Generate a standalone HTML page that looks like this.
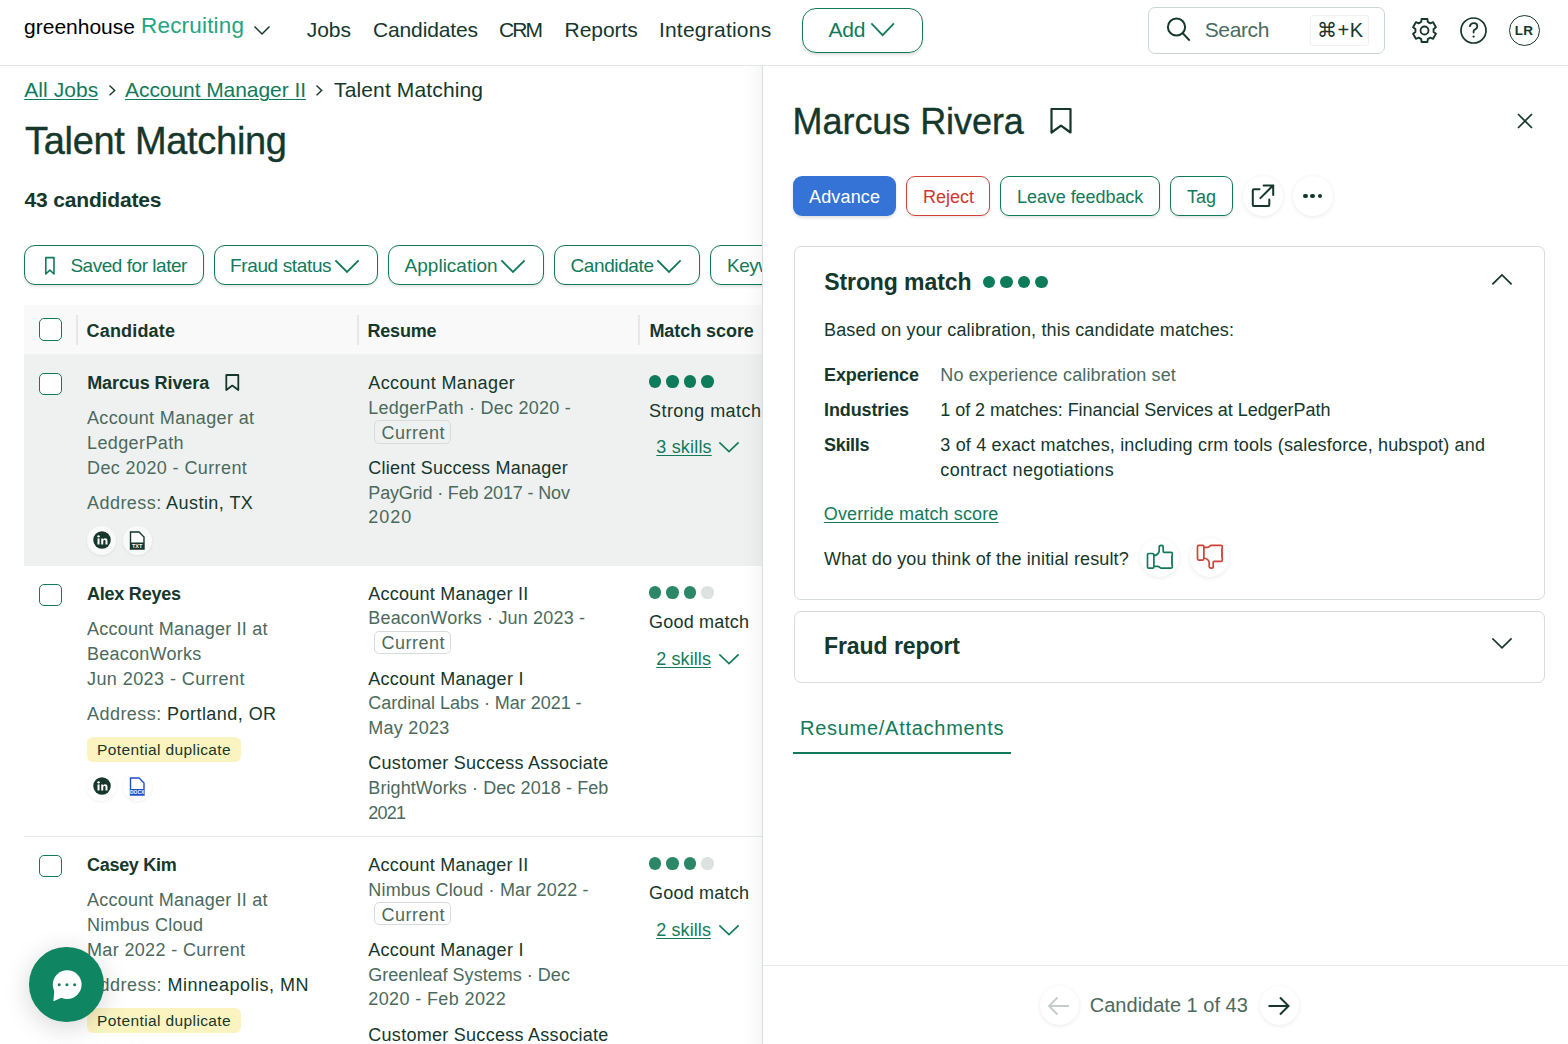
<!DOCTYPE html>
<html><head><meta charset="utf-8">
<style>
*{box-sizing:border-box;margin:0;padding:0}
html,body{width:1568px;height:1044px;overflow:hidden;background:#fff}
body{font-family:"Liberation Sans",sans-serif;color:#15372c;position:relative;-webkit-font-smoothing:antialiased}
.a{position:absolute;white-space:nowrap}
svg{position:absolute;overflow:visible}
.clip{position:absolute;overflow:hidden}
</style></head><body>
<div class="a" style="left:24.0px;top:13.62px;font-size:21px;line-height:26px;color:#000;letter-spacing:0.008px;">greenhouse</div>
<div class="a" style="left:141.0px;top:12.30px;font-size:22.5px;line-height:28px;color:#24a47f;letter-spacing:0.190px;">Recruiting</div>
<svg style="left:252px;top:24px" width="20" height="13" viewBox="0 0 20 13"><path d="M3 3 L10.0 10 L17 3" fill="none" stroke="#15372c" stroke-width="1.5" stroke-linecap="square"/></svg>
<div class="a" style="left:306.7px;top:16.92px;font-size:21px;line-height:26px;color:#15372c;letter-spacing:-0.020px;">Jobs</div>
<div class="a" style="left:373.0px;top:16.92px;font-size:21px;line-height:26px;color:#15372c;letter-spacing:-0.138px;">Candidates</div>
<div class="a" style="left:499.0px;top:16.92px;font-size:21px;line-height:26px;color:#15372c;letter-spacing:-1.910px;">CRM</div>
<div class="a" style="left:564.5px;top:16.92px;font-size:21px;line-height:26px;color:#15372c;letter-spacing:-0.039px;">Reports</div>
<div class="a" style="left:658.9px;top:16.92px;font-size:21px;line-height:26px;color:#15372c;letter-spacing:0.233px;">Integrations</div>
<div class="a" style="left:802px;top:8px;width:121px;height:45px;border:1.3px solid #127a5a;border-radius:14px;box-shadow:0 2px 3px rgba(0,0,0,.13)"></div>
<div class="a" style="left:828.4px;top:16.72px;font-size:21px;line-height:26px;color:#127a5a;letter-spacing:-0.184px;">Add</div>
<svg style="left:868.5px;top:21.3px" width="27.299999999999955" height="17.099999999999998" viewBox="0 0 27.299999999999955 17.099999999999998"><path d="M3 3 L13.649999999999977 14.099999999999998 L24.299999999999955 3" fill="none" stroke="#127a5a" stroke-width="1.8" stroke-linecap="square"/></svg>
<div class="a" style="left:1148px;top:7px;width:237px;height:47px;border:1px solid #cbd5d1;border-radius:7px"></div>
<svg style="left:1160px;top:10px" width="40" height="40" viewBox="0 0 40 40"><circle cx="16.5" cy="17" r="8.6" fill="none" stroke="#15372c" stroke-width="2"/><path d="M22.8 23.3 L29.7 30.6" stroke="#15372c" stroke-width="2"/></svg>
<div class="a" style="left:1204.7px;top:16.92px;font-size:21px;line-height:26px;color:#4b6a5d;letter-spacing:-0.368px;">Search</div>
<div class="a" style="left:1309.5px;top:14.5px;width:59.5px;height:31px;border:1px solid #eef1f0;border-radius:3px"></div>
<div class="a" style="left:1317.0px;top:17.77px;font-size:20px;line-height:25px;color:#15372c;letter-spacing:0.500px;">&#8984;+K</div>
<svg style="left:1411.5px;top:17.5px" width="25" height="25" viewBox="0 0 25 25"><path d="M9.20 3.91 L9.62 0.95 L15.38 0.95 L15.80 3.91 L18.29 5.35 L21.06 4.23 L23.94 9.22 L21.59 11.06 L21.59 13.94 L23.94 15.78 L21.06 20.77 L18.29 19.65 L15.80 21.09 L15.38 24.05 L9.62 24.05 L9.20 21.09 L6.71 19.65 L3.94 20.77 L1.06 15.78 L3.41 13.94 L3.41 11.06 L1.06 9.22 L3.94 4.23 L6.71 5.35Z" fill="none" stroke="#15372c" stroke-width="1.9" stroke-linejoin="round"/><circle cx="12.5" cy="12.5" r="4" fill="none" stroke="#15372c" stroke-width="1.8"/></svg>
<svg style="left:1460px;top:16.5px" width="27" height="27" viewBox="0 0 27 27"><circle cx="13.5" cy="13.5" r="12.5" fill="none" stroke="#15372c" stroke-width="1.7"/><path d="M9.9 9.2c.5-1.9 2-3 3.8-3 2 0 3.6 1.4 3.6 3.3 0 1.8-1.4 2.6-2.5 3.1-.9.4-1.2.9-1.2 1.7v1.3" fill="none" stroke="#15372c" stroke-width="1.8" stroke-linecap="round"/><circle cx="13.6" cy="19.6" r="1.15" fill="#15372c"/></svg>
<div class="a" style="left:1508.5px;top:15px;width:31px;height:31px;border:1.2px solid #15372c;border-radius:50%"></div>
<div class="a" style="left:1508.5px;top:23px;width:31px;text-align:center;font-size:13.5px;line-height:16px;font-weight:bold;letter-spacing:0.2px">LR</div>
<div class="a" style="left:0px;top:65px;width:1568px;height:1px;background:#e2e7e5"></div>
<div class="a" style="left:24.2px;top:76.92px;font-size:21px;line-height:26px;color:#127a5a;letter-spacing:0.067px;text-decoration:underline;text-decoration-thickness:1.4px;text-underline-offset:1.8px;">All Jobs</div>
<svg style="left:107.3px;top:82.6px" width="10.700000000000003" height="14.800000000000011" viewBox="0 0 10.700000000000003 14.800000000000011"><path d="M3 3 L7.700000000000003 7.400000000000006 L3 11.800000000000011" fill="none" stroke="#15372c" stroke-width="1.4" stroke-linecap="square"/></svg>
<div class="a" style="left:125.0px;top:76.92px;font-size:21px;line-height:26px;color:#127a5a;letter-spacing:-0.065px;text-decoration:underline;text-decoration-thickness:1.4px;text-underline-offset:1.8px;">Account Manager II</div>
<svg style="left:314.3px;top:82.6px" width="10.699999999999989" height="14.800000000000011" viewBox="0 0 10.699999999999989 14.800000000000011"><path d="M3 3 L7.699999999999989 7.400000000000006 L3 11.800000000000011" fill="none" stroke="#15372c" stroke-width="1.4" stroke-linecap="square"/></svg>
<div class="a" style="left:334.0px;top:76.82px;font-size:21px;line-height:26px;color:#15372c;letter-spacing:0.137px;">Talent Matching</div>
<div class="a" style="left:25.0px;top:116.83px;font-size:38px;line-height:48px;color:#15372c;letter-spacing:-0.296px;-webkit-text-stroke:0.35px #15372c;">Talent Matching</div>
<div class="a" style="left:24.5px;top:186.92px;font-size:21px;line-height:26px;color:#15372c;font-weight:bold;letter-spacing:-0.159px;">43 candidates</div>
<div class="clip" style="left:0;top:0;width:762px;height:1044px">
<div class="a" style="left:24px;top:245px;width:180px;height:40px;border:1.3px solid #127a5a;border-radius:11px;background:#fff;box-shadow:0 2px 3px rgba(0,0,0,.10)"></div>
<div class="a" style="left:70.4px;top:254.42px;font-size:19px;line-height:24px;color:#127a5a;letter-spacing:-0.468px;">Saved for later</div>
<svg style="left:43px;top:255px" width="14" height="22" viewBox="0 0 14 22"><path d="M2.8 2.6 H11 V19 L6.9 15.2 L2.8 19 Z" fill="none" stroke="#127a5a" stroke-width="1.6" stroke-linejoin="round"/></svg>
<div class="a" style="left:214px;top:245px;width:164px;height:40px;border:1.3px solid #127a5a;border-radius:11px;background:#fff;box-shadow:0 2px 3px rgba(0,0,0,.10)"></div>
<div class="a" style="left:230.0px;top:254.42px;font-size:19px;line-height:24px;color:#127a5a;letter-spacing:-0.363px;">Fraud status</div>
<svg style="left:333px;top:258px" width="28" height="17" viewBox="0 0 28 17"><path d="M3 3 L14.0 14 L25 3" fill="none" stroke="#127a5a" stroke-width="1.8" stroke-linecap="square"/></svg>
<div class="a" style="left:388px;top:245px;width:155.5px;height:40px;border:1.3px solid #127a5a;border-radius:11px;background:#fff;box-shadow:0 2px 3px rgba(0,0,0,.10)"></div>
<div class="a" style="left:404.6px;top:254.42px;font-size:19px;line-height:24px;color:#127a5a;letter-spacing:0.005px;">Application</div>
<svg style="left:499px;top:258px" width="28" height="17" viewBox="0 0 28 17"><path d="M3 3 L14.0 14 L25 3" fill="none" stroke="#127a5a" stroke-width="1.8" stroke-linecap="square"/></svg>
<div class="a" style="left:554px;top:245px;width:146px;height:40px;border:1.3px solid #127a5a;border-radius:11px;background:#fff;box-shadow:0 2px 3px rgba(0,0,0,.10)"></div>
<div class="a" style="left:570.5px;top:254.42px;font-size:19px;line-height:24px;color:#127a5a;letter-spacing:-0.390px;">Candidate</div>
<svg style="left:655px;top:258px" width="28" height="17" viewBox="0 0 28 17"><path d="M3 3 L14.0 14 L25 3" fill="none" stroke="#127a5a" stroke-width="1.8" stroke-linecap="square"/></svg>
<div class="a" style="left:710px;top:245px;width:150px;height:40px;border:1.3px solid #127a5a;border-radius:11px;background:#fff;box-shadow:0 2px 3px rgba(0,0,0,.10)"></div>
<div class="a" style="left:727.0px;top:254.42px;font-size:19px;line-height:24px;color:#127a5a;letter-spacing:-0.489px;">Keywords</div>
<div class="a" style="left:24px;top:305px;width:760px;height:49px;background:#f9f9f9"></div>
<div class="a" style="left:39px;top:318px;width:23px;height:23px;border:1.3px solid #127a5a;border-radius:5px;background:#fff"></div>
<div class="a" style="left:76.3px;top:315px;width:1.6px;height:30px;background:#e6e8e7"></div>
<div class="a" style="left:357.2px;top:315px;width:1.6px;height:30px;background:#e6e8e7"></div>
<div class="a" style="left:638px;top:315px;width:1.6px;height:30px;background:#e6e8e7"></div>
<div class="a" style="left:86.5px;top:320.16px;font-size:18px;line-height:22px;color:#15372c;font-weight:bold;letter-spacing:0.185px;">Candidate</div>
<div class="a" style="left:367.5px;top:320.16px;font-size:18px;line-height:22px;color:#15372c;font-weight:bold;letter-spacing:-0.207px;">Resume</div>
<div class="a" style="left:649.4px;top:319.66px;font-size:18px;line-height:22px;color:#15372c;font-weight:bold;letter-spacing:-0.055px;">Match score</div>
<div class="a" style="left:24px;top:354px;width:740px;height:211.5px;background:#eff1f1"></div>
<div class="a" style="left:39px;top:373px;width:23px;height:22px;border:1.3px solid #127a5a;border-radius:5px;background:#fff"></div>
<div class="a" style="left:87.2px;top:372.26px;font-size:18px;line-height:22px;color:#15372c;font-weight:bold;letter-spacing:-0.089px;">Marcus Rivera</div>
<svg style="left:224px;top:373px" width="18" height="19" viewBox="0 0 18 19"><path d="M2.3 2 H14.3 V17 L8.3 12.6 L2.3 17 Z" fill="none" stroke="#15372c" stroke-width="1.8" stroke-linejoin="round"/></svg>
<div class="a" style="left:87.0px;top:406.96px;font-size:18px;line-height:22px;color:#4b6a5d;letter-spacing:0.347px;">Account Manager at</div>
<div class="a" style="left:87.0px;top:432.06px;font-size:18px;line-height:22px;color:#4b6a5d;letter-spacing:0.390px;">LedgerPath</div>
<div class="a" style="left:87.0px;top:457.06px;font-size:18px;line-height:22px;color:#4b6a5d;letter-spacing:0.395px;">Dec 2020 - Current</div>
<div class="a" style="left:87.0px;top:492.06px;font-size:18px;line-height:22px;color:#4b6a5d;letter-spacing:0.450px;">Address: <span style="color:#15372c">Austin, TX</span></div>
<div class="a" style="left:87.1px;top:525.5px;width:29px;height:29px;border-radius:50%;background:rgba(255,255,255,.55);box-shadow:0 1px 3px rgba(0,0,0,.07)"></div>
<div class="a" style="left:122.5px;top:525.5px;width:29px;height:29px;border-radius:50%;background:rgba(255,255,255,.55);box-shadow:0 1px 3px rgba(0,0,0,.07)"></div>
<svg style="left:92.6px;top:531px" width="18" height="18" viewBox="0 0 18 18"><g transform="translate(9 9) scale(1.12) translate(-8 -8)"><circle cx="8" cy="8" r="7.8" fill="#15372c"/><rect x="4" y="6.6" width="1.8" height="5.4" fill="#fff"/><circle cx="4.9" cy="4.7" r="1.05" fill="#fff"/><path d="M7.3 12 V6.6 H9 V7.5 C9.5 6.8 10.2 6.5 11 6.5 C12.3 6.5 12.9 7.3 12.9 8.8 V12 H11.1 V9.1 C11.1 8.3 10.8 7.9 10.2 7.9 C9.5 7.9 9.1 8.4 9.1 9.2 V12 Z" fill="#fff"/></g></svg>
<svg style="left:129px;top:530.5px" width="16" height="19" viewBox="0 0 16 19"><path d="M1.5 1 H10 L15 6 V18 H1.5 Z" fill="#fff" stroke="#15372c" stroke-width="1.4"/><rect x="1.5" y="11.5" width="13.5" height="6.5" fill="#15372c"/><text x="8.2" y="17" font-size="5.5" font-weight="bold" fill="#fff" text-anchor="middle" font-family="Liberation Sans">TXT</text></svg>
<div class="a" style="left:368.3px;top:371.56px;font-size:18px;line-height:22px;color:#15372c;letter-spacing:0.386px;">Account Manager</div>
<div class="a" style="left:368.3px;top:396.56px;font-size:18px;line-height:22px;color:#4b6a5d;letter-spacing:0.239px;">LedgerPath · Dec 2020 -</div>
<div class="a" style="left:374.3px;top:420.3px;width:77px;height:23.3px;border:1px solid #d6dcda;border-radius:5px"></div>
<div class="a" style="left:381.5px;top:422.16px;font-size:18px;line-height:22px;color:#4b6a5d;letter-spacing:0.495px;">Current</div>
<div class="a" style="left:368.3px;top:456.56px;font-size:18px;line-height:22px;color:#15372c;letter-spacing:0.209px;">Client Success Manager</div>
<div class="a" style="left:368.3px;top:481.56px;font-size:18px;line-height:22px;color:#4b6a5d;letter-spacing:-0.148px;">PayGrid · Feb 2017 - Nov</div>
<div class="a" style="left:368.3px;top:506.36px;font-size:18px;line-height:22px;color:#4b6a5d;letter-spacing:0.951px;">2020</div>
<div class="a" style="left:648.9000000000001px;top:375.3px;width:12.6px;height:12.6px;border-radius:50%;background:#0e7b5a"></div>
<div class="a" style="left:666.3000000000001px;top:375.3px;width:12.6px;height:12.6px;border-radius:50%;background:#0e7b5a"></div>
<div class="a" style="left:683.7px;top:375.3px;width:12.6px;height:12.6px;border-radius:50%;background:#0e7b5a"></div>
<div class="a" style="left:701.1px;top:375.3px;width:12.6px;height:12.6px;border-radius:50%;background:#0e7b5a"></div>
<div class="a" style="left:649.0px;top:400.06px;font-size:18px;line-height:22px;color:#15372c;letter-spacing:0.449px;">Strong match</div>
<div class="a" style="left:656.3px;top:436.46px;font-size:18px;line-height:22px;color:#127a5a;letter-spacing:0.184px;text-decoration:underline;text-decoration-thickness:1.4px;text-underline-offset:1.8px;">3 skills</div>
<svg style="left:717px;top:440.3px" width="24" height="14.5" viewBox="0 0 24 14.5"><path d="M3 3 L12.0 11.5 L21 3" fill="none" stroke="#127a5a" stroke-width="1.7" stroke-linecap="square"/></svg>
<div class="a" style="left:39px;top:584.2px;width:23px;height:22px;border:1.3px solid #127a5a;border-radius:5px;background:#fff"></div>
<div class="a" style="left:87.0px;top:582.96px;font-size:18px;line-height:22px;color:#15372c;font-weight:bold;letter-spacing:-0.230px;">Alex Reyes</div>
<div class="a" style="left:87.0px;top:617.86px;font-size:18px;line-height:22px;color:#4b6a5d;letter-spacing:0.220px;">Account Manager II at</div>
<div class="a" style="left:87.0px;top:642.86px;font-size:18px;line-height:22px;color:#4b6a5d;letter-spacing:0.257px;">BeaconWorks</div>
<div class="a" style="left:87.0px;top:667.86px;font-size:18px;line-height:22px;color:#4b6a5d;letter-spacing:0.430px;">Jun 2023 - Current</div>
<div class="a" style="left:87.0px;top:702.56px;font-size:18px;line-height:22px;color:#4b6a5d;letter-spacing:0.450px;">Address: <span style="color:#15372c">Portland, OR</span></div>
<div class="a" style="left:87px;top:737.3px;width:153.6px;height:24.4px;background:#fcf4c0;border-radius:6px"></div>
<div class="a" style="left:97.0px;top:740.23px;font-size:15.5px;line-height:19px;color:#15372c;letter-spacing:0.390px;">Potential duplicate</div>
<div class="a" style="left:87.1px;top:771.6px;width:29px;height:29px;border-radius:50%;background:rgba(255,255,255,.55);box-shadow:0 1px 3px rgba(0,0,0,.07)"></div>
<div class="a" style="left:122.5px;top:771.6px;width:29px;height:29px;border-radius:50%;background:rgba(255,255,255,.55);box-shadow:0 1px 3px rgba(0,0,0,.07)"></div>
<svg style="left:92.6px;top:777.1px" width="18" height="18" viewBox="0 0 18 18"><g transform="translate(9 9) scale(1.12) translate(-8 -8)"><circle cx="8" cy="8" r="7.8" fill="#15372c"/><rect x="4" y="6.6" width="1.8" height="5.4" fill="#fff"/><circle cx="4.9" cy="4.7" r="1.05" fill="#fff"/><path d="M7.3 12 V6.6 H9 V7.5 C9.5 6.8 10.2 6.5 11 6.5 C12.3 6.5 12.9 7.3 12.9 8.8 V12 H11.1 V9.1 C11.1 8.3 10.8 7.9 10.2 7.9 C9.5 7.9 9.1 8.4 9.1 9.2 V12 Z" fill="#fff"/></g></svg>
<svg style="left:129px;top:776.6px" width="16" height="19" viewBox="0 0 16 19"><path d="M1.5 1 H10 L15 6 V18 H1.5 Z" fill="#fff" stroke="#1f4fc6" stroke-width="1.4"/><rect x="1.5" y="12" width="13.5" height="6" fill="#1f4fc6"/><text x="8.2" y="17" font-size="5" font-weight="bold" fill="#fff" text-anchor="middle" font-family="Liberation Sans">DOCX</text></svg>
<div class="a" style="left:368.3px;top:583.06px;font-size:18px;line-height:22px;color:#15372c;letter-spacing:0.230px;">Account Manager II</div>
<div class="a" style="left:368.3px;top:607.46px;font-size:18px;line-height:22px;color:#4b6a5d;letter-spacing:0.170px;">BeaconWorks · Jun 2023 -</div>
<div class="a" style="left:374.3px;top:630.5px;width:77px;height:23.3px;border:1px solid #d6dcda;border-radius:5px"></div>
<div class="a" style="left:381.5px;top:632.36px;font-size:18px;line-height:22px;color:#4b6a5d;letter-spacing:0.495px;">Current</div>
<div class="a" style="left:368.3px;top:667.76px;font-size:18px;line-height:22px;color:#15372c;letter-spacing:0.250px;">Account Manager I</div>
<div class="a" style="left:368.3px;top:692.16px;font-size:18px;line-height:22px;color:#4b6a5d;letter-spacing:-0.033px;">Cardinal Labs · Mar 2021 -</div>
<div class="a" style="left:368.3px;top:717.06px;font-size:18px;line-height:22px;color:#4b6a5d;letter-spacing:0.264px;">May 2023</div>
<div class="a" style="left:368.3px;top:752.46px;font-size:18px;line-height:22px;color:#15372c;letter-spacing:0.276px;">Customer Success Associate</div>
<div class="a" style="left:368.3px;top:777.36px;font-size:18px;line-height:22px;color:#4b6a5d;letter-spacing:0.086px;">BrightWorks · Dec 2018 - Feb</div>
<div class="a" style="left:368.3px;top:802.16px;font-size:18px;line-height:22px;color:#4b6a5d;letter-spacing:-0.782px;">2021</div>
<div class="a" style="left:648.9000000000001px;top:586.2px;width:12.6px;height:12.6px;border-radius:50%;background:#2c8767"></div>
<div class="a" style="left:666.3000000000001px;top:586.2px;width:12.6px;height:12.6px;border-radius:50%;background:#2c8767"></div>
<div class="a" style="left:683.7px;top:586.2px;width:12.6px;height:12.6px;border-radius:50%;background:#2c8767"></div>
<div class="a" style="left:701.1px;top:586.2px;width:12.6px;height:12.6px;border-radius:50%;background:#dde2e0"></div>
<div class="a" style="left:649.0px;top:610.76px;font-size:18px;line-height:22px;color:#15372c;letter-spacing:0.216px;">Good match</div>
<div class="a" style="left:656.3px;top:647.76px;font-size:18px;line-height:22px;color:#127a5a;letter-spacing:0.084px;text-decoration:underline;text-decoration-thickness:1.4px;text-underline-offset:1.8px;">2 skills</div>
<svg style="left:717px;top:651.6px" width="24" height="14.5" viewBox="0 0 24 14.5"><path d="M3 3 L12.0 11.5 L21 3" fill="none" stroke="#127a5a" stroke-width="1.7" stroke-linecap="square"/></svg>
<div class="a" style="left:24px;top:836px;width:740px;height:1.2px;background:#e5e9e7"></div>
<div class="a" style="left:39px;top:855.2px;width:23px;height:22px;border:1.3px solid #127a5a;border-radius:5px;background:#fff"></div>
<div class="a" style="left:87.0px;top:854.16px;font-size:18px;line-height:22px;color:#15372c;font-weight:bold;letter-spacing:-0.294px;">Casey Kim</div>
<div class="a" style="left:87.0px;top:888.86px;font-size:18px;line-height:22px;color:#4b6a5d;letter-spacing:0.220px;">Account Manager II at</div>
<div class="a" style="left:87.0px;top:913.86px;font-size:18px;line-height:22px;color:#4b6a5d;letter-spacing:0.268px;">Nimbus Cloud</div>
<div class="a" style="left:87.0px;top:938.86px;font-size:18px;line-height:22px;color:#4b6a5d;letter-spacing:0.349px;">Mar 2022 - Current</div>
<div class="a" style="left:87.0px;top:973.56px;font-size:18px;line-height:22px;color:#4b6a5d;letter-spacing:0.500px;">Address: <span style="color:#15372c">Minneapolis, MN</span></div>
<div class="a" style="left:87px;top:1008.3px;width:153.6px;height:24.4px;background:#fcf4c0;border-radius:6px"></div>
<div class="a" style="left:97.0px;top:1011.23px;font-size:15.5px;line-height:19px;color:#15372c;letter-spacing:0.390px;">Potential duplicate</div>
<div class="a" style="left:87.1px;top:1042.6px;width:29px;height:29px;border-radius:50%;background:rgba(255,255,255,.55);box-shadow:0 1px 3px rgba(0,0,0,.07)"></div>
<div class="a" style="left:122.5px;top:1042.6px;width:29px;height:29px;border-radius:50%;background:rgba(255,255,255,.55);box-shadow:0 1px 3px rgba(0,0,0,.07)"></div>
<svg style="left:92.6px;top:1048.1px" width="18" height="18" viewBox="0 0 18 18"><g transform="translate(9 9) scale(1.12) translate(-8 -8)"><circle cx="8" cy="8" r="7.8" fill="#15372c"/><rect x="4" y="6.6" width="1.8" height="5.4" fill="#fff"/><circle cx="4.9" cy="4.7" r="1.05" fill="#fff"/><path d="M7.3 12 V6.6 H9 V7.5 C9.5 6.8 10.2 6.5 11 6.5 C12.3 6.5 12.9 7.3 12.9 8.8 V12 H11.1 V9.1 C11.1 8.3 10.8 7.9 10.2 7.9 C9.5 7.9 9.1 8.4 9.1 9.2 V12 Z" fill="#fff"/></g></svg>
<svg style="left:129px;top:1047.6px" width="16" height="19" viewBox="0 0 16 19"><path d="M1.5 1 H10 L15 6 V18 H1.5 Z" fill="#fff" stroke="#15372c" stroke-width="1.4"/><rect x="1.5" y="11.5" width="13.5" height="6.5" fill="#15372c"/><text x="8.2" y="17" font-size="5.5" font-weight="bold" fill="#fff" text-anchor="middle" font-family="Liberation Sans">TXT</text></svg>
<div class="a" style="left:368.3px;top:854.26px;font-size:18px;line-height:22px;color:#15372c;letter-spacing:0.230px;">Account Manager II</div>
<div class="a" style="left:368.3px;top:878.66px;font-size:18px;line-height:22px;color:#4b6a5d;letter-spacing:0.171px;">Nimbus Cloud · Mar 2022 -</div>
<div class="a" style="left:374.3px;top:901.6999999999999px;width:77px;height:23.3px;border:1px solid #d6dcda;border-radius:5px"></div>
<div class="a" style="left:381.5px;top:903.56px;font-size:18px;line-height:22px;color:#4b6a5d;letter-spacing:0.495px;">Current</div>
<div class="a" style="left:368.3px;top:938.96px;font-size:18px;line-height:22px;color:#15372c;letter-spacing:0.250px;">Account Manager I</div>
<div class="a" style="left:368.3px;top:963.66px;font-size:18px;line-height:22px;color:#4b6a5d;letter-spacing:0.024px;">Greenleaf Systems · Dec</div>
<div class="a" style="left:368.3px;top:988.46px;font-size:18px;line-height:22px;color:#4b6a5d;letter-spacing:0.378px;">2020 - Feb 2022</div>
<div class="a" style="left:368.3px;top:1023.86px;font-size:18px;line-height:22px;color:#15372c;letter-spacing:0.276px;">Customer Success Associate</div>
<div class="a" style="left:648.9000000000001px;top:857.2px;width:12.6px;height:12.6px;border-radius:50%;background:#2c8767"></div>
<div class="a" style="left:666.3000000000001px;top:857.2px;width:12.6px;height:12.6px;border-radius:50%;background:#2c8767"></div>
<div class="a" style="left:683.7px;top:857.2px;width:12.6px;height:12.6px;border-radius:50%;background:#2c8767"></div>
<div class="a" style="left:701.1px;top:857.2px;width:12.6px;height:12.6px;border-radius:50%;background:#dde2e0"></div>
<div class="a" style="left:649.0px;top:881.66px;font-size:18px;line-height:22px;color:#15372c;letter-spacing:0.216px;">Good match</div>
<div class="a" style="left:656.3px;top:918.76px;font-size:18px;line-height:22px;color:#127a5a;letter-spacing:0.084px;text-decoration:underline;text-decoration-thickness:1.4px;text-underline-offset:1.8px;">2 skills</div>
<svg style="left:717px;top:922.6px" width="24" height="14.5" viewBox="0 0 24 14.5"><path d="M3 3 L12.0 11.5 L21 3" fill="none" stroke="#127a5a" stroke-width="1.7" stroke-linecap="square"/></svg>
</div>
<div class="clip" style="left:0;top:66px;width:762px;height:978px">
<div class="a" style="left:762px;top:-30px;width:40px;height:1100px;box-shadow:0 0 22px rgba(0,0,0,.075)"></div>
</div>
<div class="a" style="left:29px;top:947px;width:74.5px;height:74.5px;border-radius:50%;background:#108561;box-shadow:0 5px 26px rgba(0,0,0,.17)"></div>
<svg style="left:40px;top:960px" width="50" height="50" viewBox="0 0 50 50"><circle cx="27.2" cy="24.6" r="14.4" fill="#fff"/><path d="M14.6 28 L13.4 40.4 C13.3 40.9 13.6 41.1 14.1 40.9 L22.5 37.2 Z" fill="#fff"/><circle cx="19.2" cy="24.8" r="1.5" fill="#13805d"/><circle cx="26.9" cy="24.8" r="1.5" fill="#13805d"/><circle cx="34.6" cy="24.8" r="1.5" fill="#13805d"/></svg>
<div class="a" style="left:762px;top:66px;width:806px;height:978px;background:#fff;border-left:1px solid #d9dfdc"></div>
<div class="a" style="left:792.6px;top:99.33px;font-size:36px;line-height:45px;color:#15372c;letter-spacing:-0.064px;-webkit-text-stroke:0.35px #15372c;">Marcus Rivera</div>
<svg style="left:1048px;top:106px" width="26" height="30" viewBox="0 0 26 30"><path d="M3.5 3 H22.5 V26.5 L13 19.6 L3.5 26.5 Z" fill="none" stroke="#15372c" stroke-width="2.2" stroke-linejoin="round"/></svg>
<svg style="left:1515px;top:111px" width="20" height="20" viewBox="0 0 20 20"><path d="M3 3 L17 17 M17 3 L3 17" stroke="#15372c" stroke-width="1.7"/></svg>
<div class="a" style="left:793px;top:176px;width:103px;height:39.5px;background:#3574d6;border-radius:9px;box-shadow:0 2px 3px rgba(0,0,0,.12)"></div>
<div class="a" style="left:809.0px;top:185.86px;font-size:18px;line-height:22px;color:#fff;letter-spacing:0.158px;">Advance</div>
<div class="a" style="left:906px;top:176px;width:84px;height:39.5px;border:1.2px solid #d2403a;border-radius:9px;box-shadow:0 2px 3px rgba(0,0,0,.08)"></div>
<div class="a" style="left:923.0px;top:185.86px;font-size:18px;line-height:22px;color:#cf3530;letter-spacing:-0.005px;">Reject</div>
<div class="a" style="left:1000px;top:176px;width:159.5px;height:39.5px;border:1.2px solid #127a5a;border-radius:9px;box-shadow:0 2px 3px rgba(0,0,0,.10)"></div>
<div class="a" style="left:1017.0px;top:185.86px;font-size:18px;line-height:22px;color:#127a5a;letter-spacing:-0.062px;">Leave feedback</div>
<div class="a" style="left:1170px;top:176px;width:63px;height:39.5px;border:1.2px solid #127a5a;border-radius:9px;box-shadow:0 2px 3px rgba(0,0,0,.10)"></div>
<div class="a" style="left:1187.0px;top:185.86px;font-size:18px;line-height:22px;color:#127a5a;letter-spacing:-0.012px;">Tag</div>
<div class="a" style="left:1242.6px;top:176px;width:40px;height:40px;border-radius:50%;background:#fff;box-shadow:0 1px 4px rgba(0,0,0,.09)"></div>
<div class="a" style="left:1292.5px;top:176px;width:40px;height:40px;border-radius:50%;background:#fff;box-shadow:0 1px 4px rgba(0,0,0,.09)"></div>
<svg style="left:1240px;top:172px" width="40" height="40" viewBox="0 0 40 40"><path d="M19.5 17.2 H14 C13.4 17.2 12.8 17.8 12.8 18.4 V32.9 C12.8 33.5 13.4 34.1 14 34.1 H28.1 C28.7 34.1 29.3 33.5 29.3 32.9 V27.4" fill="none" stroke="#15372c" stroke-width="2" stroke-linecap="round"/><path d="M20.4 26.1 L33 13.5 M23.6 13.4 H33.2 V23" fill="none" stroke="#15372c" stroke-width="2" stroke-linecap="round"/></svg>
<div class="a" style="left:1303.1000000000001px;top:193.8px;width:4.6px;height:4.6px;border-radius:50%;background:#15372c"></div>
<div class="a" style="left:1310.4px;top:193.8px;width:4.6px;height:4.6px;border-radius:50%;background:#15372c"></div>
<div class="a" style="left:1317.7px;top:193.8px;width:4.6px;height:4.6px;border-radius:50%;background:#15372c"></div>
<div class="a" style="left:793.5px;top:246px;width:751.5px;height:353.5px;border:1px solid #d6dcda;border-radius:7px"></div>
<div class="a" style="left:824.2px;top:268.03px;font-size:23px;line-height:29px;color:#15372c;font-weight:bold;letter-spacing:-0.085px;">Strong match</div>
<div class="a" style="left:982.8px;top:275.5px;width:12.4px;height:12.4px;border-radius:50%;background:#0e7b5a"></div>
<div class="a" style="left:1000.3px;top:275.5px;width:12.4px;height:12.4px;border-radius:50%;background:#0e7b5a"></div>
<div class="a" style="left:1017.8px;top:275.5px;width:12.4px;height:12.4px;border-radius:50%;background:#0e7b5a"></div>
<div class="a" style="left:1035.2px;top:275.5px;width:12.4px;height:12.4px;border-radius:50%;background:#0e7b5a"></div>
<svg style="left:1489.5px;top:272.3px" width="24.0" height="14.699999999999989" viewBox="0 0 24.0 14.699999999999989"><path d="M3 11.699999999999989 L12.0 3 L21.0 11.699999999999989" fill="none" stroke="#15372c" stroke-width="1.7" stroke-linecap="square"/></svg>
<div class="a" style="left:824.0px;top:318.86px;font-size:18px;line-height:22px;color:#15372c;letter-spacing:0.158px;">Based on your calibration, this candidate matches:</div>
<div class="a" style="left:824.0px;top:363.76px;font-size:18px;line-height:22px;color:#15372c;font-weight:bold;letter-spacing:-0.118px;">Experience</div>
<div class="a" style="left:940.3px;top:363.76px;font-size:18px;line-height:22px;color:#4b6a5d;letter-spacing:0.120px;">No experience calibration set</div>
<div class="a" style="left:824.0px;top:398.96px;font-size:18px;line-height:22px;color:#15372c;font-weight:bold;letter-spacing:-0.103px;">Industries</div>
<div class="a" style="left:940.3px;top:398.96px;font-size:18px;line-height:22px;color:#15372c;letter-spacing:-0.045px;">1 of 2 matches: Financial Services at LedgerPath</div>
<div class="a" style="left:824.0px;top:434.16px;font-size:18px;line-height:22px;color:#15372c;font-weight:bold;letter-spacing:-0.306px;">Skills</div>
<div class="a" style="left:940.3px;top:434.16px;font-size:18px;line-height:22px;color:#15372c;letter-spacing:0.173px;">3 of 4 exact matches, including crm tools (salesforce, hubspot) and</div>
<div class="a" style="left:940.3px;top:458.86px;font-size:18px;line-height:22px;color:#15372c;letter-spacing:0.364px;">contract negotiations</div>
<div class="a" style="left:823.8px;top:503.46px;font-size:18px;line-height:22px;color:#127a5a;letter-spacing:0.133px;text-decoration:underline;text-decoration-thickness:1.4px;text-underline-offset:1.8px;">Override match score</div>
<div class="a" style="left:824.0px;top:548.36px;font-size:18px;line-height:22px;color:#15372c;letter-spacing:0.144px;">What do you think of the initial result?</div>
<div class="a" style="left:1140.2px;top:537.5px;width:39px;height:39px;border-radius:50%;background:#fff;box-shadow:0 1px 4px rgba(0,0,0,.09)"></div>
<div class="a" style="left:1190.2px;top:537.5px;width:39px;height:39px;border-radius:50%;background:#fff;box-shadow:0 1px 4px rgba(0,0,0,.09)"></div>
<svg style="left:1140px;top:540px" width="40" height="35" viewBox="0 0 40 35"><path d="M8.8 13.5 H12.6 C13.3 13.5 13.9 14.1 13.9 14.8 V26.9 C13.9 27.6 13.3 28.2 12.6 28.2 H8.8 C8.1 28.2 7.5 27.6 7.5 26.9 V14.8 C7.5 14.1 8.1 13.5 8.8 13.5 Z M13.9 15.6 C16.6 15.2 18.8 13.6 19.2 11 V7 C19.2 6 20.2 5.4 21.3 5.4 C22.4 5.4 23.2 6.2 23.2 7.2 V11.4 C23.2 12 23.6 12.3 24.2 12.3 H31.2 C31.8 12.3 32.3 12.8 32.3 13.4 V15.5 C31.6 16 31.6 17 32.3 17.4 C31.6 17.9 31.6 18.9 32.3 19.4 C31.6 19.9 31.6 20.9 32.3 21.3 C31.6 21.8 31.6 22.8 32.3 23.2 C31.6 23.7 31.6 24.7 32.3 25.1 V27 C32.3 27.7 31.7 28.2 31 28.2 H21.2 C19.9 28.2 19.6 26.3 17.6 26.3 H13.9" fill="none" stroke="#127a5a" stroke-width="1.7" stroke-linejoin="round"/></svg>
<svg style="left:1190px;top:540px" width="40" height="35" viewBox="0 0 40 35"><g transform="translate(0 33.6) scale(1 -1)"><path d="M8.8 13.5 H12.6 C13.3 13.5 13.9 14.1 13.9 14.8 V26.9 C13.9 27.6 13.3 28.2 12.6 28.2 H8.8 C8.1 28.2 7.5 27.6 7.5 26.9 V14.8 C7.5 14.1 8.1 13.5 8.8 13.5 Z M13.9 15.6 C16.6 15.2 18.8 13.6 19.2 11 V7 C19.2 6 20.2 5.4 21.3 5.4 C22.4 5.4 23.2 6.2 23.2 7.2 V11.4 C23.2 12 23.6 12.3 24.2 12.3 H31.2 C31.8 12.3 32.3 12.8 32.3 13.4 V15.5 C31.6 16 31.6 17 32.3 17.4 C31.6 17.9 31.6 18.9 32.3 19.4 C31.6 19.9 31.6 20.9 32.3 21.3 C31.6 21.8 31.6 22.8 32.3 23.2 C31.6 23.7 31.6 24.7 32.3 25.1 V27 C32.3 27.7 31.7 28.2 31 28.2 H21.2 C19.9 28.2 19.6 26.3 17.6 26.3 H13.9" fill="none" stroke="#d2403a" stroke-width="1.7" stroke-linejoin="round"/></g></svg>
<div class="a" style="left:793.5px;top:610.5px;width:751.5px;height:72.5px;border:1px solid #d6dcda;border-radius:7px"></div>
<div class="a" style="left:824.0px;top:632.03px;font-size:23px;line-height:29px;color:#15372c;font-weight:bold;letter-spacing:-0.067px;">Fraud report</div>
<svg style="left:1489.5px;top:635.5px" width="24.0" height="14.799999999999955" viewBox="0 0 24.0 14.799999999999955"><path d="M3 3 L12.0 11.799999999999955 L21.0 3" fill="none" stroke="#15372c" stroke-width="1.7" stroke-linecap="square"/></svg>
<div class="a" style="left:800.0px;top:715.87px;font-size:20px;line-height:25px;color:#127a5a;letter-spacing:0.723px;">Resume/Attachments</div>
<div class="a" style="left:793px;top:752px;width:218px;height:2px;background:#127a5a"></div>
<div class="a" style="left:763px;top:965px;width:805px;height:1px;background:#e6eae8"></div>
<div class="a" style="left:1039.5px;top:986.2px;width:39px;height:39px;border-radius:50%;background:#fff;box-shadow:0 1px 4px rgba(0,0,0,.09)"></div>
<div class="a" style="left:1259.5px;top:986.2px;width:39px;height:39px;border-radius:50%;background:#fff;box-shadow:0 1px 4px rgba(0,0,0,.09)"></div>
<svg style="left:1046px;top:994px" width="26" height="24" viewBox="0 0 26 24"><path d="M23 12 H3.5 M11.5 3.5 L3 12 L11.5 20.5" fill="none" stroke="#c3ccc9" stroke-width="1.8"/></svg>
<div class="a" style="left:1089.8px;top:993.47px;font-size:20px;line-height:25px;color:#4b6a5d;letter-spacing:0.004px;">Candidate 1 of 43</div>
<svg style="left:1266px;top:994px" width="26" height="24" viewBox="0 0 26 24"><path d="M2.5 12 H22 M14 3.5 L22.5 12 L14 20.5" fill="none" stroke="#15372c" stroke-width="2"/></svg>
</body></html>
